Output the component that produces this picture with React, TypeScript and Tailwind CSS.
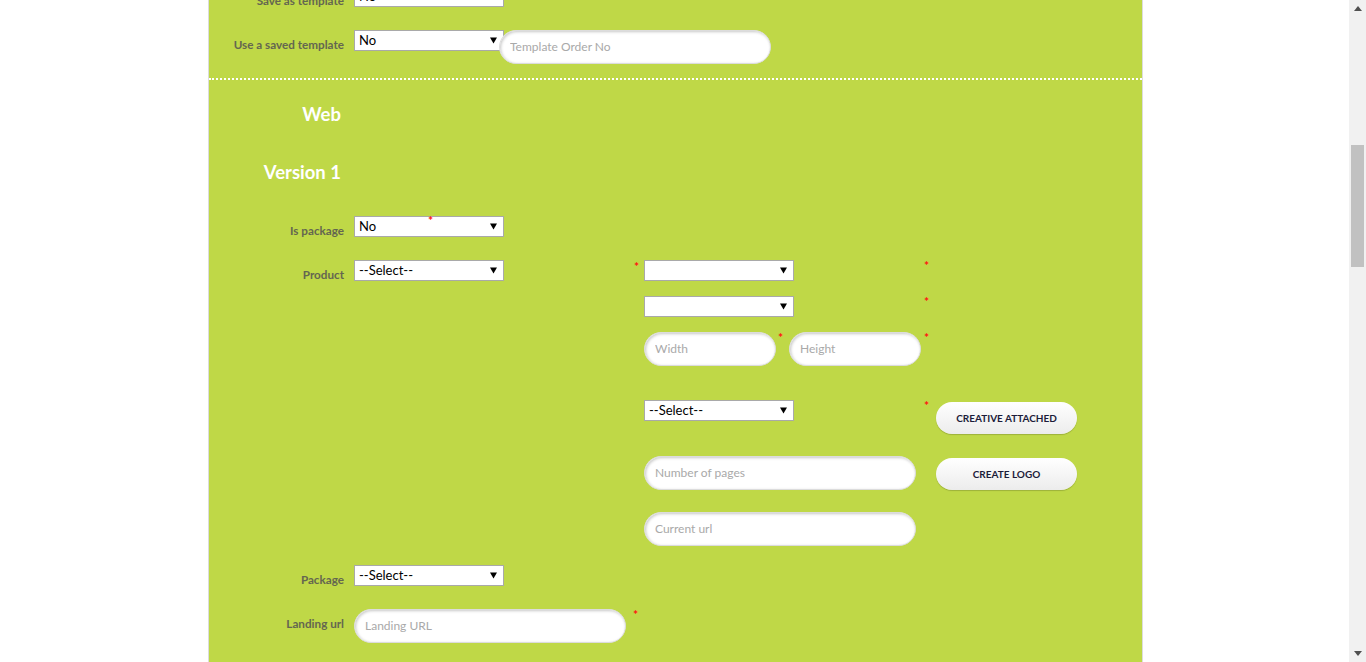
const font = { fontFamily: 'Lato, "Liberation Sans", sans-serif' };

function Star({ className }: { className: string }) {
  return <span className={`absolute text-[12px] font-bold leading-none text-[#ff1010] ${className}`}>*</span>;
}

function Select({ value = '', w = 'w-[150px]' }: { value?: string; w?: string }) {
  return (
    <div className={`${w} h-[21px] bg-white border border-[#a9a9a9] pl-[4px] pr-[6px] flex items-center justify-between text-[13px] text-black`}>
      <span>{value}</span>
      <svg width="7" height="7" viewBox="0 0 7 7"><path d="M0 0.5h7L3.5 6.5z" fill="#000" /></svg>
    </div>
  );
}

function Field({ placeholder, w }: { placeholder: string; w: string }) {
  return (
    <input
      placeholder={placeholder}
      className={`${w} h-[34px] rounded-full bg-white border border-[#dcdcdc] shadow-[inset_1px_1px_3px_rgba(0,0,0,0.22)] pl-[10px] pb-[1px] text-[12px] text-[#333] placeholder:text-[#a9a9a9] outline-none`}
      style={font}
    />
  );
}

function Button({ children }: { children: string }) {
  return (
    <button className="w-[141px] h-[32px] rounded-full bg-gradient-to-b from-white to-[#ececec] shadow-[0_1px_1px_rgba(0,0,0,0.18)] text-[10px] font-bold text-[#1c1c3a] uppercase">
      {children}
    </button>
  );
}

function Label({ children }: { children: string }) {
  return <div className="w-[135px] h-[21px] shrink-0 text-right pt-[6px] text-[11.7px] leading-4 font-bold text-[#646650] whitespace-nowrap">{children}</div>;
}

export default function App() {
  return (
    <div className="h-[662px] overflow-hidden flex bg-white" style={font}>
      <div className="w-[208px] shrink-0" />
      <div className="w-[935px] shrink-0 bg-[#bfd847] border-x border-[#dcdcdc]">
        <div className="mt-[-14px] flex flex-col">
          <div className="flex items-start h-[21px]">
            <Label>Save as template</Label>
            <div className="ml-[10px]"><Select value="No" /></div>
          </div>

          <div className="mt-[23px] flex items-start">
            <Label>Use a saved template</Label>
            <div className="ml-[10px]"><Select value="No" /></div>
            <div className="ml-[-5px]"><Field placeholder="Template Order No" w="w-[272px]" /></div>
          </div>

          <div className="mt-[14px] border-t-2 border-dotted border-white" />

          <h2 className="mt-[22px] w-[132px] text-right text-[18.5px] leading-6 font-bold text-white">Web</h2>
          <h2 className="mt-[34px] w-[132px] text-right text-[18.5px] leading-6 font-bold text-white">Version 1</h2>

          <div className="mt-[32px] flex items-start h-[21px]">
            <Label>Is package</Label>
            <div className="ml-[10px] relative">
              <Select value="No" />
              <Star className="left-[74px] top-[-1px]" />
            </div>
          </div>

          <div className="mt-[23px] flex items-start">
            <Label>Product</Label>
            <div className="ml-[10px]"><Select value="--Select--" /></div>
            <div className="ml-[140px] relative flex flex-col">
              <Star className="left-[-10px] top-[1px]" />
              <div className="relative w-[292px]">
                <Select />
                <Star className="left-[280px] top-0" />
              </div>
              <div className="mt-[15px] relative w-[292px]">
                <Select />
                <Star className="left-[280px] top-0" />
              </div>
              <div className="mt-[15px] relative flex w-[292px]">
                <Field placeholder="Width" w="w-[132px]" />
                <div className="ml-[13px]"><Field placeholder="Height" w="w-[132px]" /></div>
                <Star className="left-[134px] top-[0px]" />
                <Star className="left-[280px] top-[0px]" />
              </div>
              <div className="mt-[34px] flex items-start">
                <div className="relative w-[292px]">
                  <Select value="--Select--" />
                  <Star className="left-[280px] top-[0px]" />
                </div>
                <div className="mt-[2px]"><Button>Creative attached</Button></div>
              </div>
              <div className="mt-[22px] flex items-start">
                <div className="w-[292px]"><Field placeholder="Number of pages" w="w-[272px]" /></div>
                <div className="mt-[2px]"><Button>Create logo</Button></div>
              </div>
              <div className="mt-[22px]">
                <Field placeholder="Current url" w="w-[272px]" />
              </div>
            </div>
          </div>

          <div className="mt-[19px] flex items-start h-[21px]">
            <Label>Package</Label>
            <div className="ml-[10px]"><Select value="--Select--" /></div>
          </div>

          <div className="mt-[23px] flex items-start">
            <Label>Landing url</Label>
            <div className="ml-[10px] relative">
              <Field placeholder="Landing URL" w="w-[272px]" />
              <Star className="left-[279px] top-[0px]" />
            </div>
          </div>
        </div>
      </div>
      <div className="flex-1" />
      <div className="w-[17px] shrink-0 bg-[#f1f1f1] flex flex-col items-center">
        <svg className="mt-[6px]" width="8" height="5" viewBox="0 0 8 5"><path d="M4 0L8 5H0z" fill="#505050" /></svg>
        <div className="mt-[134px] w-[13px] h-[122px] bg-[#c1c1c1]" />
        <div className="flex-1" />
        <svg className="mb-[6px]" width="8" height="5" viewBox="0 0 8 5"><path d="M0 0H8L4 5z" fill="#505050" /></svg>
      </div>
    </div>
  );
}
